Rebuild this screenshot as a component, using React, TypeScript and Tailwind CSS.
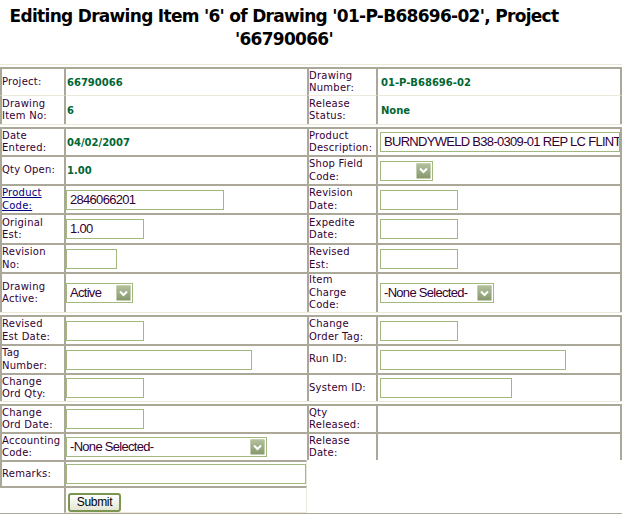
import React from "react";

const LBL = "font-['DejaVu_Sans',sans-serif] text-[10px] leading-[12.5px] tracking-[0.25px] text-[#330033] whitespace-nowrap";
const VAL = "font-['DejaVu_Sans',sans-serif] font-bold text-[10px] text-[#006633] whitespace-nowrap";
const INP = "font-['Liberation_Sans',Arial,sans-serif] text-[13px] tracking-[-0.7px] text-[#330033]";

const CELL_GRAY = "p-0 align-middle border-l-2 border-t-2 border-l-[#aca899] border-t-[#aca899]";
const CELL_LIGHT = "p-0 align-middle border-l-2 border-t border-l-[#aca899] border-t-[#ece9d8]";
const CELL_GRAY_LAST = "p-0 align-middle border-l-2 border-t-2 border-r-2 border-l-[#aca899] border-t-[#aca899] border-r-[#aca899]";
const CELL_LIGHT_LAST = "p-0 align-middle border-l-2 border-t border-r-2 border-l-[#aca899] border-t-[#ece9d8] border-r-[#aca899]";

function Inp({ w, value }: { w: string; value?: string }) {
  return (
    <div className={`${w} h-[20px] border border-[#a3b87e] bg-white overflow-hidden flex items-center pl-[3px] ${INP}`}>
      <span className="whitespace-nowrap">{value ?? ""}</span>
    </div>
  );
}

function Sel({ w, value }: { w: string; value?: string }) {
  return (
    <div className={`${w} h-[20px] border border-[#a3b87e] bg-white flex items-center justify-between pl-[3px] pr-px ${INP}`}>
      <span className="whitespace-nowrap">{value ?? ""}</span>
      <div className="w-[15px] h-[16px] shrink-0 rounded-[1px] border border-[#c3cdb2] bg-linear-to-b from-[#b2c09c] to-[#88996e] flex items-center justify-center">
        <svg width="9" height="7" viewBox="0 0 9 7">
          <path d="M1 1.5 L4.5 5 L8 1.5" fill="none" stroke="white" strokeWidth="2" />
        </svg>
      </div>
    </div>
  );
}

function Spacer() {
  return (
    <tr className="h-[3px]">
      <td colSpan={4} className="p-0 h-[3px] border-t border-t-[#ece9d8]"></td>
    </tr>
  );
}

export default function App() {
  return (
    <div className="w-[622px] h-[514px] bg-white overflow-hidden">
      <div className="w-[568px] pt-[5px] h-[64px] text-center font-['DejaVu_Sans',sans-serif] font-bold text-[17px] leading-[23px] tracking-[-0.7px] text-black">
        Editing Drawing Item '6' of Drawing '01-P-B68696-02', Project '66790066'
      </div>
      <table className="w-[622px] table-fixed border-separate border-spacing-0">
        <colgroup>
          <col className="w-[64px]" />
          <col className="w-[243px]" />
          <col className="w-[69px]" />
          <col className="w-[246px]" />
        </colgroup>
        <tbody>
          <Spacer />
          <tr className="h-[28px]">
            <td className={CELL_GRAY}><div className={LBL}>Project:</div></td>
            <td className={CELL_GRAY}><div className={`${VAL} pl-px`}>66790066</div></td>
            <td className={CELL_GRAY}><div className={LBL}>Drawing<br />Number:</div></td>
            <td className={CELL_GRAY_LAST}><div className={`${VAL} pl-[3px]`}>01-P-B68696-02</div></td>
          </tr>
          <tr className="h-[29px]">
            <td className={CELL_LIGHT}><div className={LBL}>Drawing<br />Item No:</div></td>
            <td className={CELL_LIGHT}><div className={`${VAL} pl-px`}>6</div></td>
            <td className={CELL_LIGHT}><div className={LBL}>Release<br />Status:</div></td>
            <td className={CELL_LIGHT_LAST}><div className={`${VAL} pl-[3px] text-[#006060]`}>None</div></td>
          </tr>
          <Spacer />
          <tr className="h-[28px]">
            <td className={CELL_GRAY}><div className={LBL}>Date<br />Entered:</div></td>
            <td className={CELL_GRAY}><div className={`${VAL} pl-px`}>04/02/2007</div></td>
            <td className={CELL_GRAY}><div className={LBL}>Product<br />Description:</div></td>
            <td className={CELL_GRAY_LAST}><div className="pl-[2px]"><Inp w="w-[240px]" value="BURNDYWELD B38-0309-01 REP LC FLINT" /></div></td>
          </tr>
          <tr className="h-[29px]">
            <td className={CELL_GRAY}><div className={LBL}>Qty Open:</div></td>
            <td className={CELL_GRAY}><div className={`${VAL} pl-px`}>1.00</div></td>
            <td className={CELL_GRAY}><div className={LBL}>Shop Field<br />Code:</div></td>
            <td className={CELL_GRAY_LAST}><div className="pl-[2px]"><Sel w="w-[53px]" /></div></td>
          </tr>
          <tr className="h-[29px]">
            <td className={CELL_GRAY}>
              <div className={LBL}>
                <a href="#" className="text-[#000080] underline">Product<br />Code:</a>
              </div>
            </td>
            <td className={CELL_GRAY}><Inp w="w-[158px]" value="2846066201" /></td>
            <td className={CELL_GRAY}><div className={LBL}>Revision<br />Date:</div></td>
            <td className={CELL_GRAY_LAST}><div className="pl-[2px]"><Inp w="w-[78px]" /></div></td>
          </tr>
          <tr className="h-[30px]">
            <td className={CELL_GRAY}><div className={LBL}>Original<br />Est:</div></td>
            <td className={CELL_GRAY}><Inp w="w-[78px]" value="1.00" /></td>
            <td className={CELL_GRAY}><div className={LBL}>Expedite<br />Date:</div></td>
            <td className={CELL_GRAY_LAST}><div className="pl-[2px]"><Inp w="w-[78px]" /></div></td>
          </tr>
          <tr className="h-[29px]">
            <td className={CELL_GRAY}><div className={LBL}>Revision<br />No:</div></td>
            <td className={CELL_GRAY}><Inp w="w-[51px]" /></td>
            <td className={CELL_GRAY}><div className={LBL}>Revised<br />Est:</div></td>
            <td className={CELL_GRAY_LAST}><div className="pl-[2px]"><Inp w="w-[78px]" /></div></td>
          </tr>
          <tr className="h-[40px]">
            <td className={CELL_GRAY}><div className={LBL}>Drawing<br />Active:</div></td>
            <td className={CELL_GRAY}><Sel w="w-[67px]" value="Active" /></td>
            <td className={CELL_GRAY}><div className={LBL}>Item<br />Charge<br />Code:</div></td>
            <td className={CELL_GRAY_LAST}><div className="pl-[2px]"><Sel w="w-[114px]" value="-None Selected-" /></div></td>
          </tr>
          <Spacer />
          <tr className="h-[29px]">
            <td className={CELL_GRAY}><div className={LBL}>Revised<br />Est Date:</div></td>
            <td className={CELL_GRAY}><Inp w="w-[78px]" /></td>
            <td className={CELL_GRAY}><div className={LBL}>Change<br />Order Tag:</div></td>
            <td className={CELL_GRAY_LAST}><div className="pl-[2px]"><Inp w="w-[78px]" /></div></td>
          </tr>
          <tr className="h-[29px]">
            <td className={CELL_GRAY}><div className={LBL}>Tag<br />Number:</div></td>
            <td className={CELL_GRAY}><Inp w="w-[186px]" /></td>
            <td className={CELL_GRAY}><div className={LBL}>Run ID:</div></td>
            <td className={CELL_GRAY_LAST}><div className="pl-[2px]"><Inp w="w-[186px]" /></div></td>
          </tr>
          <tr className="h-[28px]">
            <td className={CELL_GRAY}><div className={LBL}>Change<br />Ord Qty:</div></td>
            <td className={CELL_GRAY}><Inp w="w-[78px]" /></td>
            <td className={CELL_GRAY}><div className={LBL}>System ID:</div></td>
            <td className={CELL_GRAY_LAST}><div className="pl-[2px]"><Inp w="w-[132px]" /></div></td>
          </tr>
          <Spacer />
          <tr className="h-[28px]">
            <td className={CELL_GRAY}><div className={LBL}>Change<br />Ord Date:</div></td>
            <td className={CELL_GRAY}><Inp w="w-[78px]" /></td>
            <td className={CELL_GRAY}><div className={LBL}>Qty<br />Released:</div></td>
            <td className={CELL_GRAY_LAST}></td>
          </tr>
          <tr className="h-[28px]">
            <td className={CELL_GRAY}><div className={LBL}>Accounting<br />Code:</div></td>
            <td className={CELL_GRAY}><Sel w="w-[201px]" value="-None Selected-" /></td>
            <td className={CELL_GRAY}><div className={LBL}>Release<br />Date:</div></td>
            <td className={CELL_GRAY_LAST}></td>
          </tr>
          <tr className="h-[26px]">
            <td className={CELL_GRAY}><div className={LBL}>Remarks:</div></td>
            <td className="p-0 align-middle border-l-2 border-t-2 border-r border-l-[#aca899] border-t-[#aca899] border-r-[#ece9d8]">
              <Inp w="w-[240px]" />
            </td>
          </tr>
          <tr className="h-[27px]">
            <td className="p-0 border-t-2 border-t-[#aca899]"></td>
            <td className="p-0 align-middle border-l-2 border-t-2 border-r border-b border-l-[#aca899] border-t-[#aca899] border-r-[#ece9d8] border-b-[#ece9d8]">
              <button className="ml-[2px] h-[19px] w-[53px] border-2 border-[#7a9550] rounded-[3px] bg-linear-to-b from-white to-[#e4e6d4] font-['Liberation_Sans',Arial,sans-serif] text-[12px] tracking-[-0.3px] text-black leading-none">
                Submit
              </button>
            </td>
          </tr>
        </tbody>
      </table>
      <div className="w-[622px] h-0 border-t-2 border-t-[#aca899]"></div>
    </div>
  );
}
